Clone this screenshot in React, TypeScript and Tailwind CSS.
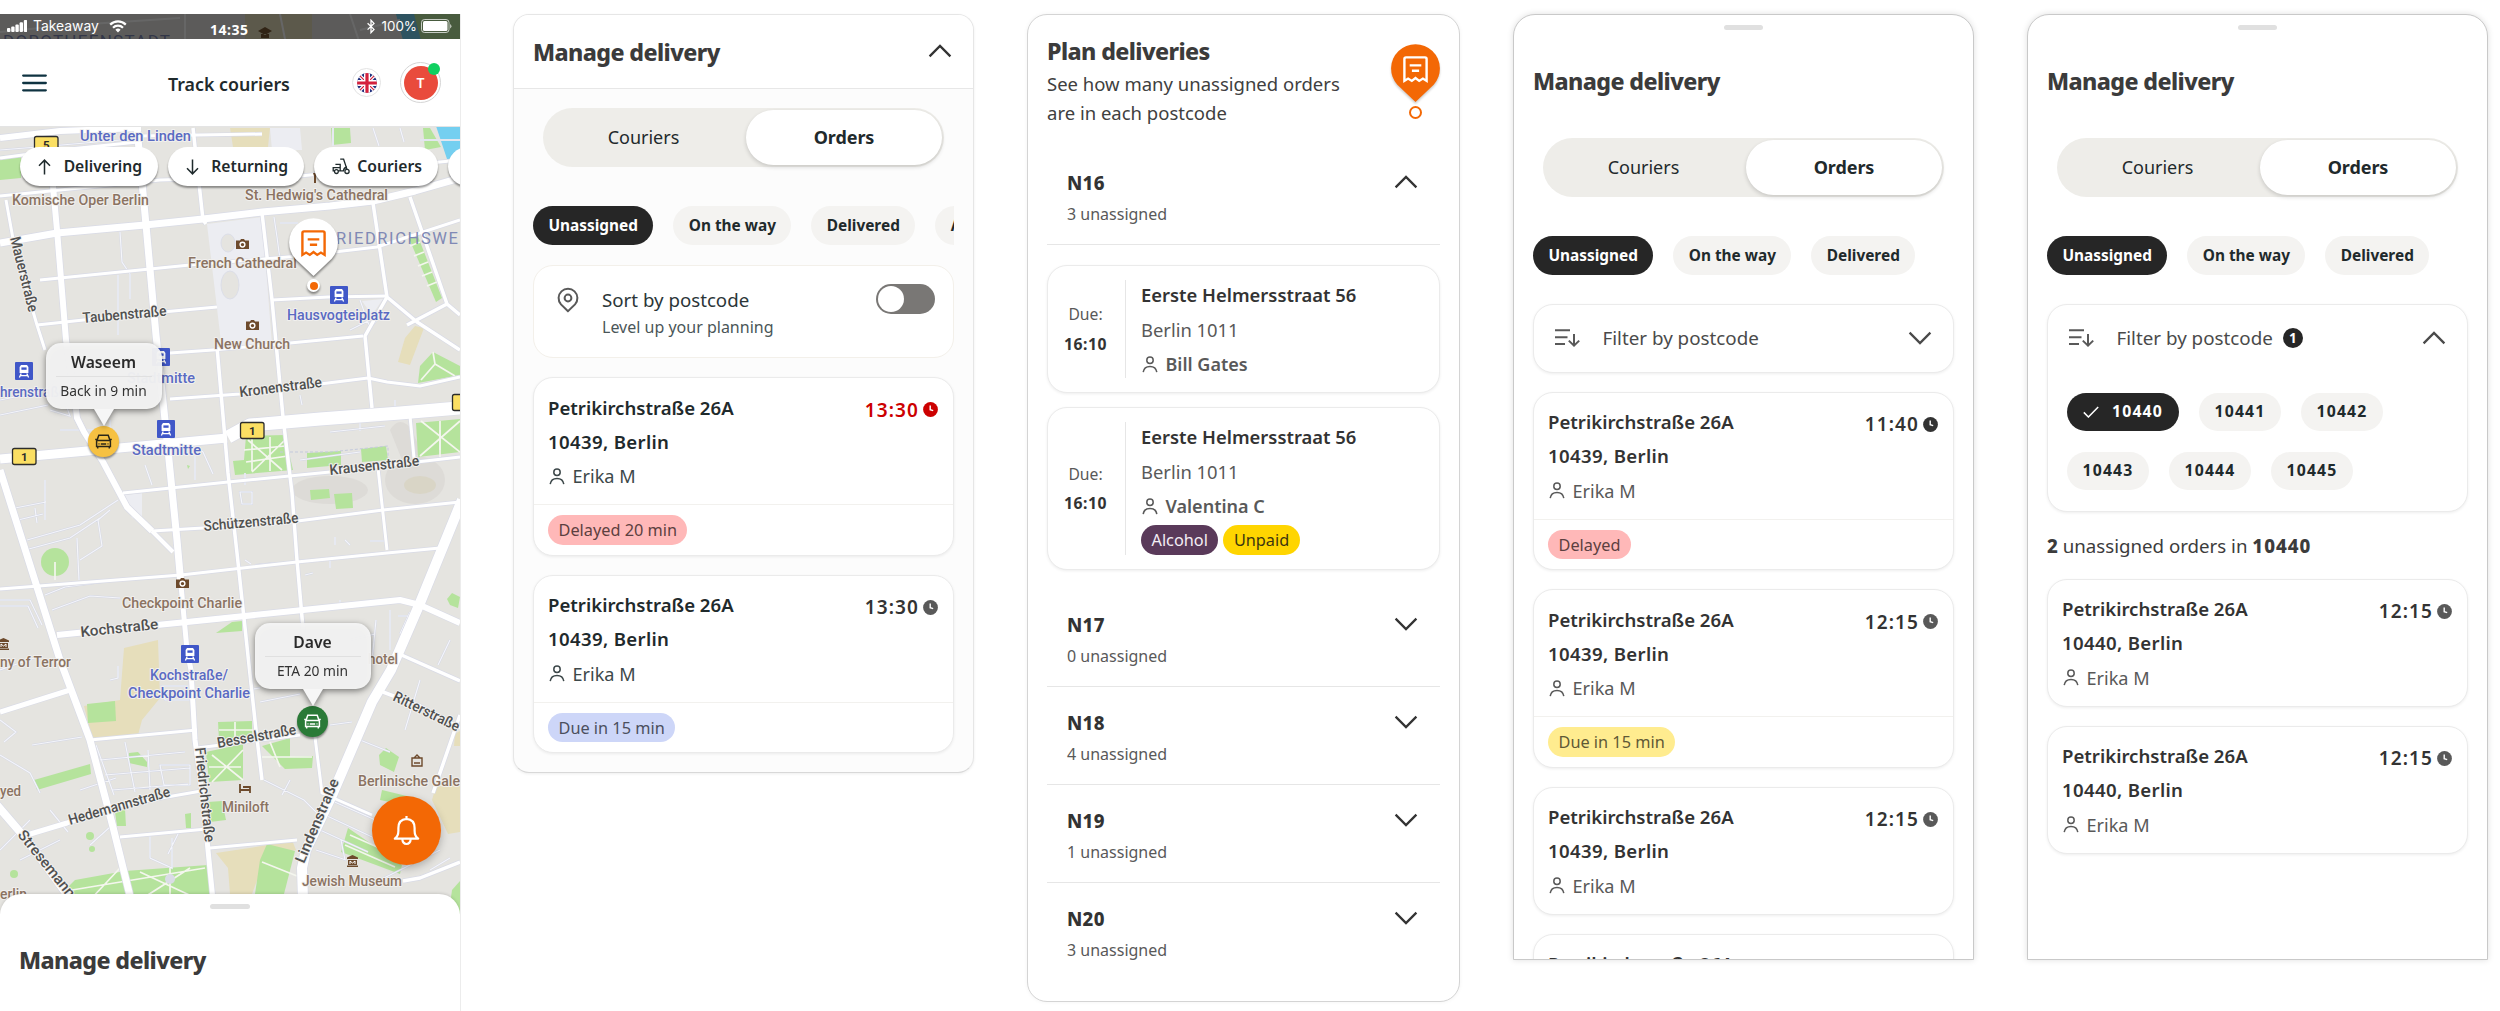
import type { ReactNode } from "react";
import clsx from "clsx";

// ─────────────────────────────────────────────────────────────
// Data
// ─────────────────────────────────────────────────────────────

interface Order {
  address: string;
  city: string;
  courier: string;
  time: string;
  timeClass?: string;
  clockClass?: string;
  tag?: { label: string; className: string };
}

const base = { address: "Petrikirchstraße 26A", city: "10439, Berlin", courier: "Erika M" };

const SORT_ORDERS: Order[] = [
  {
    ...base,
    time: "13:30",
    timeClass: "text-[#cc0000]",
    clockClass: "text-[#cc0000]",
    tag: { label: "Delayed 20 min", className: "bg-[#ffb8b8] text-[#5c4040]" },
  },
  { ...base, time: "13:30", tag: { label: "Due in 15 min", className: "bg-[#cdd6f8] text-[#4b4f5e]" } },
];

const FILTER_ORDERS: Order[] = [
  {
    ...base,
    time: "11:40",
    clockClass: "text-[#333333]",
    tag: { label: "Delayed", className: "bg-[#ffb8b8] text-[#5c4040]" },
  },
  { ...base, time: "12:15", tag: { label: "Due in 15 min", className: "bg-[#ffec8f] text-[#5f5936]" } },
  { ...base, time: "12:15" },
  { ...base, time: "12:15" },
];

const POSTCODE_ORDERS: Order[] = [
  { ...base, city: "10440, Berlin", time: "12:15" },
  { ...base, city: "10440, Berlin", time: "12:15" },
];

const ZONES = [
  { code: "N17", count: 0 },
  { code: "N18", count: 4 },
  { code: "N19", count: 1 },
  { code: "N20", count: 3 },
];

export default function App() {
  return (
    <div className="flex h-[1011px] w-[2500px] items-start overflow-hidden bg-white pt-[14px] font-['Noto_Sans','Open_Sans',sans-serif] text-[#333333]">
      <TrackCouriers />
      <SortPanel />
      <PlanPanel />

      <Sheet>
        <FilterBar />
        {FILTER_ORDERS.map((order, i) => (
          <OrderCard key={i} order={order} />
        ))}
      </Sheet>

      <Sheet>
        <FilterBar open />
        <div className="flex flex-col">
          <p className="h-[48px] text-[18.7px] leading-[30px] text-[#3c3c3c]">
            <b className="font-extrabold">2</b> unassigned orders in <b className="font-extrabold tracking-[1px]">10440</b>
          </p>
          <div className="flex flex-col gap-[19px]">
            {POSTCODE_ORDERS.map((order, i) => (
              <OrderCard key={i} order={order} />
            ))}
          </div>
        </div>
      </Sheet>
    </div>
  );
}

// ─────────────────────────────────────────────────────────────
// Screens
// ─────────────────────────────────────────────────────────────

function TrackCouriers() {
  return (
    <div className="relative flex h-[997px] w-[461px] shrink-0 flex-col overflow-hidden border-r border-[#ececec]">
      <CityMap />

      {/* Status bar */}
      <div className="relative flex h-[25px] shrink-0 items-center bg-[#000000]/60 pr-[8px] pl-[7px] text-white">
        <div className="flex w-[203px] items-center">
          <svg width="20" height="12" viewBox="0 0 20 12" fill="currentColor">
            <rect x="0" y="8" width="3.4" height="4" rx="1" />
            <rect x="4.2" y="6.5" width="3.4" height="5.5" rx="1" />
            <rect x="8.4" y="4.5" width="3.4" height="7.5" rx="1" />
            <rect x="12.6" y="2.2" width="3.4" height="9.8" rx="1" />
            <rect x="16.8" y="0" width="3.4" height="12" rx="1" />
          </svg>
          <span className="ml-[6px] font-['Inter','Roboto',sans-serif] text-[13.9px]">Takeaway</span>
          <svg className="ml-[10px]" width="18" height="13" viewBox="0 0 18 13" fill="none" stroke="currentColor">
            <path d="M1.2 4.6a11 11 0 0 1 15.6 0" strokeWidth="2.2" />
            <path d="M4 7.8a7 7 0 0 1 10 0" strokeWidth="2.2" />
            <path d="M9 12.4 6.4 9.8a3.8 3.8 0 0 1 5.2 0Z" fill="currentColor" stroke="none" />
          </svg>
        </div>
        <span className="mt-[5px] text-[14px] font-bold tracking-[0.5px]">14:35</span>
        <div className="ml-auto flex items-center">
          <svg width="8" height="15" viewBox="0 0 8 15" fill="none" stroke="currentColor" strokeWidth="1.3">
            <path d="M.6 4.2 7 10.4 4 13.6V1.2L7 4.4.6 10.6" />
          </svg>
          <span className="ml-[7px] font-['Inter','Roboto',sans-serif] text-[13.4px]">100%</span>
          <svg className="ml-[4px]" width="31" height="14" viewBox="0 0 31 14">
            <rect x=".5" y=".5" width="27.5" height="13" rx="3" fill="none" stroke="#ffffff" strokeOpacity=".7" />
            <rect x="2" y="2" width="24.5" height="10" rx="1.5" fill="#ffffff" />
            <path d="M29 5v4.4q1.5-.7 1.5-2.2T29 5Z" fill="#ffffff" fillOpacity=".6" />
          </svg>
        </div>
      </div>

      {/* App header */}
      <div className="relative flex h-[88px] shrink-0 items-center border-b border-[#e4e4e4] bg-white pr-[19px] pl-[22px]">
        <svg width="25" height="18" viewBox="0 0 25 18" stroke="#0f3341" strokeWidth="2.3" strokeLinecap="round">
          <path d="M1.2 1.6h22.6M1.2 9h22.6M1.2 16.3h22.6" />
        </svg>
        <h1 className="mt-[3px] ml-[121px] text-[17.8px] font-semibold text-[#1f2a2c]">Track couriers</h1>
        <div className="ml-auto flex items-center gap-[19px]">
          <div className="flex size-[29px] items-center justify-center rounded-full border border-[#e3e3e3]">
            <UkFlag />
          </div>
          <div className="relative flex size-[41px] items-center justify-center rounded-full border border-[#d5d5d5]">
            <span className="flex size-[34px] items-center justify-center rounded-full bg-[#e94b3c] text-[14px] font-semibold text-white">
              T
            </span>
            <span className="absolute top-0 right-0 size-[12px] rounded-full bg-[#10d060]" />
          </div>
        </div>
      </div>

      {/* Map filters */}
      <div className="relative mt-5 flex h-[39px] shrink-0 gap-[10px] pl-5">
        <MapChip className="w-[138px]" label="Delivering">
          <svg width="13" height="16" viewBox="0 0 13 16" fill="none" stroke="currentColor" strokeWidth="1.5">
            <path d="M6.5 15.5V1.2M1 6.7l5.5-5.6L12 6.7" />
          </svg>
        </MapChip>
        <MapChip className="w-[136px]" label="Returning">
          <svg width="13" height="16" viewBox="0 0 13 16" fill="none" stroke="currentColor" strokeWidth="1.5">
            <path d="M6.5.5v14.3M1 9.3l5.5 5.6L12 9.3" />
          </svg>
        </MapChip>
        <MapChip className="w-[124px] pl-[15px]" label="Couriers">
          <svg width="18" height="17" viewBox="0 0 18 17" fill="none" stroke="currentColor" strokeWidth="1.3">
            <path d="M8.2 1.2h3.4l3.4 10.2M3.4 6.4h4.8v6.4H1.2V9.6h7M8.2 12.8h3.2q.6-3.4 3.6-3.8" />
            <circle cx="4.4" cy="13.6" r="1.9" fill="#ffffff" />
            <circle cx="15" cy="13.4" r="2.1" fill="#ffffff" />
          </svg>
        </MapChip>
        <MapChip className="w-[138px]" label="" />
      </div>

      {/* Pins on the map */}
      <div className="absolute top-[204px] left-[289px] flex w-[49px] flex-col items-center drop-shadow-[0_2px_1px_rgba(0,0,0,0.45)]">
        <OrderPin fill="#ffffff" stroke="#f36805" />
        <span className="mt-[3px] flex size-[13px] items-center justify-center rounded-full bg-white">
          <span className="size-[8px] rounded-full bg-[#f36805]" />
        </span>
      </div>
      <CourierPin className="top-[329px] left-[45.5px]" name="Waseem" note="Back in 9 min" color="#f6c142" ink="#2b2718" />
      <CourierPin className="top-[609px] left-[254.5px]" name="Dave" note="ETA 20 min" color="#2a7a37" ink="#ffffff" />

      {/* Notifications */}
      <button className="absolute top-[782px] left-[372px] flex size-[69px] items-center justify-center rounded-full bg-[#f36805] shadow-[0_3px_8px_rgba(0,0,0,0.25)]">
        <svg width="27" height="31" viewBox="0 0 27 31" fill="none" stroke="#ffffff" strokeWidth="2.2" strokeLinejoin="round">
          <path d="M13.5 1v3M1.8 23.7q3.6-2.6 3.6-8v-2.6q0-8.6 8.1-9.2 8.1.6 8.1 9.2v2.6q0 5.4 3.6 8Z" />
          <path d="M9.3 24.2q.4 4.8 4.2 4.8t4.2-4.8" />
        </svg>
      </button>

      {/* Bottom sheet */}
      <div className="relative mt-auto flex h-[117px] shrink-0 flex-col rounded-t-[21px] bg-white px-[19px] shadow-[0_-1px_3px_rgba(0,0,0,0.12)]">
        <span className="mt-[10px] h-[5px] w-[40px] self-center rounded-full bg-[#e0e0e0]" />
        <Title className="mt-[35px]">Manage delivery</Title>
      </div>
    </div>
  );
}

function SortPanel() {
  return (
    <div className="ml-[52px] w-[461px] shrink-0 overflow-hidden rounded-[16px] border border-[#e6e6e6] border-b-[#d8d8d8] bg-[#fcfcfc] shadow-[0_1px_3px_rgba(0,0,0,0.07)]">
      <div className="flex h-[74px] items-center justify-between border-b border-[#e7e7e7] bg-white pr-[21px] pl-[19px]">
        <Title>Manage delivery</Title>
        <Chevron up className="-mt-[2px]" />
      </div>
      <div className="flex flex-col px-[19px] pt-[19px] pb-[19px]">
        <Segmented />
        <StatusChips clipped />
        <div className="mt-5 flex h-[93px] rounded-[20px] border border-[#f3f0ea] bg-white pl-[23px]">
          <svg className="mt-[21px]" width="22" height="26" viewBox="0 0 22 26" fill="none" stroke="#595959" strokeWidth="2">
            <path d="M11 24.2 4 17.4A9.4 9.4 0 1 1 18 17.4Z" />
            <circle cx="11" cy="11" r="3.4" />
          </svg>
          <div className="ml-[23px]">
            <p className="mt-[20px] text-[18.7px] leading-[28px] text-[#2b3638]">Sort by postcode</p>
            <p className="text-[16px] leading-[26px] text-[#4a5658]">Level up your planning</p>
          </div>
          <span className="mt-[18px] mr-[18px] ml-auto h-[30px] w-[59px] rounded-full bg-[#797775] p-[2px]">
            <span className="block size-[26px] rounded-full bg-white" />
          </span>
        </div>
        <div className="mt-[19px] flex flex-col gap-[19px]">
          {SORT_ORDERS.map((order, i) => (
            <OrderCard key={i} order={order} dark />
          ))}
        </div>
      </div>
    </div>
  );
}

function PlanPanel() {
  return (
    <div className="ml-[53px] h-[988px] w-[433px] shrink-0 rounded-[20px] border border-[#d4d4d4] bg-white px-[19px] shadow-[0_0_4px_rgba(0,0,0,0.05)]">
      <div className="flex h-[132px] justify-between">
        <div className="pt-[20px]">
          <Title>Plan deliveries</Title>
          <p className="mt-[2px] w-[320px] text-[18.5px] leading-[29.3px] text-[#404040]">
            See how many unassigned orders are in each postcode
          </p>
        </div>
        <div className="mt-[29px] flex w-[49px] flex-col items-center">
          <div className="drop-shadow-[0_2px_1px_rgba(0,0,0,0.2)]">
            <OrderPin fill="#f36805" stroke="#ffffff" />
          </div>
          <span className="mt-[4px] size-[13px] shrink-0 rounded-full border-[2.5px] border-[#f36805] bg-white" />
        </div>
      </div>

      <ZoneRow code="N16" count={3} open />
      <PlanCard className="mt-5 h-[128px]" courier="Bill Gates" />
      <PlanCard className="mt-[14px] mb-[19px] h-[163px]" courier="Valentina C">
        <div className="mt-[2px] flex gap-[5px]">
          <Tag className="bg-[#5a3a5a] text-[#f4eef4]">Alcohol</Tag>
          <Tag className="bg-[#ffd500] text-[#3d3510]">Unpaid</Tag>
        </div>
      </PlanCard>
      {ZONES.map((zone) => (
        <ZoneRow key={zone.code} {...zone} />
      ))}
    </div>
  );
}

function Sheet({ children }: { children: ReactNode }) {
  return (
    <div className="ml-[53px] flex h-[946px] w-[461px] shrink-0 flex-col overflow-hidden rounded-t-[22px] border border-[#c9c9c9] bg-white px-[19px] shadow-[0_0_6px_rgba(0,0,0,0.13)]">
      <span className="mt-[10px] h-[5px] w-[39px] shrink-0 self-center rounded-full bg-[#e0e0e0]" />
      <Title className="mt-[35px]">Manage delivery</Title>
      <div className="mt-[41px] flex flex-col">
        <Segmented />
        <StatusChips />
      </div>
      <div className="mt-[28.5px] flex flex-col gap-[19px]">{children}</div>
    </div>
  );
}

// ─────────────────────────────────────────────────────────────
// Shared pieces
// ─────────────────────────────────────────────────────────────

function Title({ children, className }: { children: ReactNode; className?: string }) {
  return (
    <h2 className={clsx("text-[23.2px] leading-8 font-extrabold tracking-[-0.6px] text-[#3b3b3b]", className)}>{children}</h2>
  );
}

function Chevron({ up, className }: { up?: boolean; className?: string }) {
  return (
    <svg className={clsx("shrink-0", className)} width="24" height="14" viewBox="0 0 24 14" fill="none" stroke="currentColor" strokeWidth="2.3">
      <path d={up ? "M1.6 12.4 12 2l10.4 10.4" : "M1.6 1.6 12 12 22.4 1.6"} />
    </svg>
  );
}

function Segmented() {
  return (
    <div className="mx-[10px] flex h-[59px] rounded-full bg-[#eeede9] p-[2px] text-[18px] text-[#1f2a2c]">
      <div className="flex w-[201px] items-center justify-center pr-[4px]">Couriers</div>
      <div className="flex flex-1 items-center justify-center rounded-full bg-white font-bold tracking-[-0.1px] shadow-[0_2px_4px_rgba(0,0,0,0.16)]">
        Orders
      </div>
    </div>
  );
}

function StatusChips({ clipped }: { clipped?: boolean }) {
  return (
    <div className="mt-[39px] flex gap-[20px] overflow-hidden">
      <Pill active>Unassigned</Pill>
      <Pill>On the way</Pill>
      <Pill>Delivered</Pill>
      {clipped && <Pill>All</Pill>}
    </div>
  );
}

function Pill({ children, active }: { children: ReactNode; active?: boolean }) {
  return (
    <span
      className={clsx(
        "flex h-[39px] shrink-0 items-center rounded-full px-[15.4px] pt-px text-[15.4px] font-bold",
        active ? "bg-[#262626] text-white" : "bg-[#f4f3f1] text-[#1f2a2c]",
      )}
    >
      {children}
    </span>
  );
}

function Tag({ children, className }: { children: ReactNode; className: string }) {
  return (
    <span className={clsx("flex h-[29.5px] items-center rounded-full px-[10.5px] pt-px text-[16.3px]", className)}>
      {children}
    </span>
  );
}

function PersonIcon() {
  return (
    <svg width="16" height="17" viewBox="0 0 16 17" fill="none" stroke="currentColor" strokeWidth="1.5">
      <circle cx="8" cy="4.3" r="3.2" />
      <path d="M1.2 16.2Q2 10.4 8 10.4t6.8 5.8" />
    </svg>
  );
}

function OrderCard({ order, dark }: { order: Order; dark?: boolean }) {
  return (
    <div className="shrink-0 rounded-[20px] border border-[#ebebeb] bg-white shadow-[0_1px_3px_rgba(0,0,0,0.07)]">
      <div className="flex h-[126px] items-start justify-between pt-[12.5px] pr-[15px] pl-[14px]">
        <div className={clsx("leading-[34.3px]", dark ? "text-[#1f2a2c]" : "text-[#333333]")}>
          <p className="text-[18.6px] font-semibold">{order.address}</p>
          <p className="text-[18.6px] font-semibold tracking-[0.35px]">{order.city}</p>
          <p className={clsx("flex items-center gap-[7.5px] pl-px text-[18.1px]", dark ? "text-[#3d484a]" : "text-[#595959]")}>
            <PersonIcon />
            {order.courier}
          </p>
        </div>
        <div className={clsx("mt-[2px] flex items-center gap-[4px] leading-[34px]", order.timeClass)}>
          <span className="text-[19px] font-semibold tracking-[1.1px]">{order.time}</span>
          <svg className={order.clockClass ?? "text-[#595959]"} width="15" height="15" viewBox="0 0 15 15">
            <circle cx="7.5" cy="7.5" r="7.4" fill="currentColor" />
            <path d="M7.2 3.6v4.1l3 .9" fill="none" stroke="#ffffff" strokeWidth="1.4" />
          </svg>
        </div>
      </div>
      {order.tag && (
        <div className="flex h-[50.5px] items-center border-t border-[#f2f1ee] px-[14px]">
          <Tag className={order.tag.className}>{order.tag.label}</Tag>
        </div>
      )}
    </div>
  );
}

function ZoneRow({ code, count, open }: { code: string; count: number; open?: boolean }) {
  return (
    <div className={clsx("flex h-[98.1px] justify-between border-b pr-[22px] pl-[20px]", code === "N20" ? "border-transparent" : "border-[#e6e6e6]")}>
      <div className="pt-[20.5px]">
        <p className="text-[18.6px] leading-[30px] font-extrabold tracking-[0.3px]">{code}</p>
        <p className="mt-[4px] text-[16px] leading-6 text-[#595959]">{count} unassigned</p>
      </div>
      <Chevron up={open} className="mt-[27.5px]" />
    </div>
  );
}

function PlanCard({ courier, className, children }: { courier: string; className?: string; children?: ReactNode }) {
  return (
    <div className={clsx("flex rounded-[20px] border border-[#ebebeb] bg-white py-[14px] shadow-[0_1px_3px_rgba(0,0,0,0.07)]", className)}>
      <div className="flex w-[78px] flex-col items-center justify-center border-r border-[#e6e6e6] pt-px pr-[2px] text-[15.7px] leading-[29.5px]">
        <span className="text-[#595959]">Due:</span>
        <span className="font-bold tracking-[0.5px]">16:10</span>
      </div>
      <div className="-mt-[2px] pl-[15px] text-[18.4px] leading-[34.4px]">
        <p className="font-semibold">Eerste Helmersstraat 56</p>
        <p className="text-[#595959]">Berlin 1011</p>
        <p className="flex items-center gap-[7.5px] pl-px text-[18px] font-semibold text-[#595959]">
          <PersonIcon />
          {courier}
        </p>
        {children}
      </div>
    </div>
  );
}

function FilterBar({ open }: { open?: boolean }) {
  return (
    <div className="shrink-0 rounded-[20px] border border-[#ebebeb] bg-white text-[#4a4a4a] shadow-[0_1px_3px_rgba(0,0,0,0.07)]">
      <div className="flex h-[67px] items-center pr-[21px] pl-[20px]">
        <svg width="27" height="20" viewBox="0 0 27 20" fill="none" stroke="#595959" strokeWidth="2">
          <path d="M1 2.2h15M1 9.2h12.5M1 15.9h10M20 6v11.5M14.8 12.6l5.2 5 5.2-5" />
        </svg>
        <span className="ml-[21.5px] text-[18.8px]">Filter by postcode</span>
        {open && (
          <span className="ml-[10px] flex size-[20px] items-center justify-center rounded-full bg-[#262626] text-[13.5px] font-bold text-white">
            1
          </span>
        )}
        <Chevron up={open} className="ml-auto" />
      </div>
      {open && (
        <div className="flex h-[139px] flex-wrap content-start gap-x-[20px] gap-y-[20.5px] px-[19px] pt-[21px]">
          <PostcodePill code="10440" active />
          {["10441", "10442", "10443", "10444", "10445"].map((code) => (
            <PostcodePill key={code} code={code} />
          ))}
        </div>
      )}
    </div>
  );
}

function PostcodePill({ code, active }: { code: string; active?: boolean }) {
  return (
    <span
      className={clsx(
        "flex h-[38.5px] items-center justify-center rounded-full pt-px text-[15.8px] font-bold tracking-[1.2px]",
        active ? "w-[112px] gap-[13px] bg-[#262626] text-white" : "w-[82px] bg-[#f4f3f1] text-[#1f2a2c]",
      )}
    >
      {active && (
        <svg width="16" height="12" viewBox="0 0 16 12" fill="none" stroke="currentColor" strokeWidth="1.5">
          <path d="M.8 6.4 5.4 11 15.2 1" />
        </svg>
      )}
      {code}
    </span>
  );
}

// ─────────────────────────────────────────────────────────────
// Map overlays
// ─────────────────────────────────────────────────────────────

function MapChip({ label, className, children }: { label: string; className?: string; children?: ReactNode }) {
  return (
    <div
      className={clsx(
        "flex shrink-0 items-center justify-between rounded-full bg-white pr-[16px] pl-[18px] text-[#1f2a2c] shadow-[0_2px_2px_rgba(0,0,0,0.4)]",
        className,
      )}
    >
      {children}
      <span className="pt-px text-[15.7px] font-semibold">{label}</span>
    </div>
  );
}

function OrderPin({ fill, stroke }: { fill: string; stroke: string }) {
  return (
    <svg width="49" height="58" viewBox="0 0 49 58">
      <path d="M24.5 58 6.3 40.8A24.4 24.4 0 1 1 42.7 40.8Z" fill={fill} />
      <g fill="none" stroke={stroke} strokeWidth="2.4">
        <path d="M13.4 36.9V15q0-1.6 1.6-1.6h19q1.6 0 1.6 1.6v21.9l-3.7-2.3-3.7 2.3-3.7-2.9-3.7 2.9-3.7-2.3Z" />
        <path d="M18.7 21.4h11.6M20.9 26.8h7.2" />
      </g>
    </svg>
  );
}

function CourierPin({
  name,
  note,
  color,
  ink,
  className,
}: {
  name: string;
  note: string;
  color: string;
  ink: string;
  className: string;
}) {
  return (
    <div className={clsx("absolute flex w-[116px] flex-col items-center", className)}>
      <div className="flex flex-col items-center drop-shadow-[0_2px_3px_rgba(0,0,0,0.5)]">
        <div className="flex h-[66px] w-[116px] flex-col items-center rounded-[15px] bg-[#f6f6f6]/95 px-[10px]">
          <p className="h-[34px] w-full border-b border-[#e0e0e0] pt-[7px] text-center text-[15.7px] leading-6 font-semibold text-[#2a2a2a]">
            {name}
          </p>
          <p className="text-[13.8px] leading-[27px] text-[#333333]">{note}</p>
        </div>
        <svg width="20" height="17" viewBox="0 0 20 17">
          <path d="M0 0h20L10 17Z" fill="#f6f6f6" />
        </svg>
      </div>
      <span className="flex size-[31px] items-center justify-center rounded-full shadow-[0_2px_2px_rgba(0,0,0,0.4)]" style={{ background: color }}>
        <svg width="17" height="15" viewBox="0 0 17 15" fill="none" stroke={ink} strokeWidth="1.5">
          <path d="M1.6 12.6V7.4L3.8 1.3h9.4l2.2 6.1v5.2ZM.2 5.6h2M14.8 5.6h2M2.6 6.6h11.8M5.8 9.9h5.4M2.7 12.6v2M14.3 12.6v2" />
          <path d="M3.6 9.9h.8M12.6 9.9h.8" strokeWidth="1.8" />
        </svg>
      </span>
    </div>
  );
}

function UkFlag() {
  return (
    <svg width="20" height="20" viewBox="0 0 20 20">
      <clipPath id="flag">
        <circle cx="10" cy="10" r="10" />
      </clipPath>
      <g clipPath="url(#flag)">
        <rect width="20" height="20" fill="#1f2f7c" />
        <path d="M0 0l20 20M20 0 0 20" stroke="#ffffff" strokeWidth="3.6" />
        <path d="M0 0l20 20M20 0 0 20" stroke="#d4213d" strokeWidth="1.2" />
        <path d="M10 0v20M0 10h20" stroke="#ffffff" strokeWidth="6" />
        <path d="M10 0v20M0 10h20" stroke="#d4213d" strokeWidth="3.2" />
      </g>
    </svg>
  );
}

// ─────────────────────────────────────────────────────────────
// City map
// ─────────────────────────────────────────────────────────────

const ROADS: { w: number; d: string }[] = [
  { w: 6, d: "M0 138 60 131 141 128" },
  { w: 3, d: "M140 136 262 134M0 158 60 150 138 142M0 196 60 190 160 180 300 176 460 160M6 200 15 250 37 325 45 350" },
  { w: 7, d: "M0 243 57 233 145 225 203 219 262 212 330 206 373 201 415 191 460 178" },
  { w: 6, d: "M53 186 57 230 66 340 75 400 77 418 84 432 103 462 127 507 152 531" },
  { w: 4, d: "M152 531 173 552" },
  { w: 7, d: "M137 128 146 225 156 335 165 420 171 480 177 540 181 585" },
  { w: 5, d: "M181 585 187 650 191 670 195 740 203 800 208 850 213 900" },
  { w: 3.5, d: "M193 128 203 220 206 224M217 347 228 473 237 553 249 665 256 730 262 780M262 213 272 300 283 417 292 493 297 560 304 640" },
  { w: 3.5, d: "M373 203 387 297 417 322 460 350M387 297 365 336 372 408M410 197 447 304 460 315M447 304 407 325" },
  { w: 3, d: "M40 280 190 265 300 256 377 247 460 220M272 300 328 297 387 296M37 325 130 315 217 307M170 353 213 350 290 343 363 336" },
  { w: 3, d: "M170 399 240 394 320 384 368 378 387 382 420 386 460 377M123 493 228 482 330 472 460 457M152 531 203 528 290 522 383 510 460 502" },
  { w: 9, d: "M0 459 87 451 227 438" },
  { w: 13, d: "M228 437 250 425 320 419 400 413 470 407" },
  { w: 3, d: "M0 589 181 575 297 562 387 553 440 548M378 468 387 550M410 416 414 458" },
  { w: 6, d: "M57 635 187 622 303 610 400 600 420 605 460 623" },
  { w: 7, d: "M0 470 37 587 60 660 90 740 113 827 131 900" },
  { w: 10, d: "M462 500 420 603 391 670 372 702 333 793 306 850 302 868 303 900" },
  { w: 5, d: "M0 712 70 690M27 835 67 823 107 808" },
  { w: 8, d: "M-4 804 27 840 75 905" },
  { w: 3, d: "M90 740 197 730M197 748 300 735M107 808 167 797 207 790M120 837 207 829M210 848 297 840M315 737 322 793 372 815" },
  { w: 3.5, d: "M383 692 420 706 460 728M397 653 460 681M460 715 433 793M403 881 420 878 460 862M303 560" },
];

const LANES =
  "M0 400 40 392 60 378M0 415 48 405M0 150 50 146 120 140M333 128v18M400 128l4 14M420 140h60M373 128l6 18M120 232l2 30 8 12v25M118 275v60M274 217l3 20 4 30M280 223h18M350 330l20-10M360 300l10 28 12-14" +
  "M15 508 46 502M18 520l25-6M45 480v40M35 508l2 15M27 540 80 525 118 500M25 550 70 538 100 518M77 538l2 42M80 560l22-14-4-26 12-10M45 595l20-8 45-6M52 610l38-14 30 2M0 600h30l12 25M0 606h28l10 22" +
  "M60 430h50v-10M50 410l20 6-5-14M145 465l7 20M185 450l8-6 10 8 10 22M195 440v40M240 492h12v12h-10zM245 485v-12M330 432 385 426M360 416v15M300 460l60-8" +
  "M165 700h25v-14h-28zM96 745l18 50M100 760 185 752M105 775 190 768M112 790l76-6M125 742l10 50M148 750l2 40M80 790l36-12M50 810l18 22M20 860l40-20M0 850l30-30M90 845l20-18M150 832v26l22 10v-30M180 830l-12 24" +
  "M230 692l30-4M260 702l40-8M264 780l40 20 20 20M290 780l-8 15M340 600v10M350 640l25-6M390 610v40M376 620l-4 40M410 612l-10 22M398 616h20M330 725l22-3M360 740l30 12M420 680l-15 50M450 640l-12 25" +
  "M330 800l50 22M325 815l60 28M320 830l48 22M316 850l30 10M345 860l-4-20M380 880l60-30M400 860l40-20M430 870l20-12M0 670l40-14M0 720l16 12-12 10M32 745l50-8M0 755l30 18 10 20M110 680l8-2v-12M245 560l6 4M255 565l20-2M305 575l8-2M330 560v8" +
  "M160 765h30v20h-26zM440 430v20M300 395l2 10M395 400v8M350 545l-5-5M335 545v-8M370 541h14";

const PARKS = [
  "0,156 21,154 21,178 0,180",
  "331,128 350,128 351,143 332,145",
  "423,128 430,128 441,147 425,150",
  "408,236 417,234 442,298 436,302",
  "418,383 420,366 433,352 460,366 460,375",
  "416,423 460,419 460,452 418,457",
  "246,436 285,435 293,470 235,475 233,461 244,460",
  "307,453 341,451 341,465 307,468",
  "361,449 386,446 388,460 362,462",
  "310,490 329,489 330,498 311,500",
  "334,494 352,493 353,508 336,509",
  "216,633 232,622 242,621 242,631",
  "447,599 452,593 460,597 458,608 450,605",
  "87,704 115,701 116,721 88,723",
  "34,780 90,764 91,774 37,790",
  "129,753 138,752 147,762 147,767 129,763",
  "218,722 252,721 252,736 219,740",
  "206,752 243,744 243,780 209,782",
  "262,746 290,738 290,757 313,756 312,768 285,769",
  "379,755 386,748 399,757 394,772 380,765",
  "382,790 415,798 405,805 380,800",
  "348,828 402,865 400,874 341,852",
  "267,844 295,851 284,894 255,894 260,860",
  "55,900 75,880 125,871 208,865 210,900",
  "115,812 125,809 126,826 117,826",
  "208,802 222,801 226,820 210,822",
  "185,814 191,813 191,828 186,828",
  "452,890 461,880 461,915 450,905",
  "187,465 190,466 188,469",
];

const SQUARES = ["270,128 300,128 302,150 272,150", "207,224 262,217 272,345 222,350", "125,495 142,493 142,520 132,518", "362,301 383,299 372,315"];

const SAND = [
  "230,128 270,128 268,147 233,147",
  "415,326 424,328 410,365 398,362 405,338",
  "124,648 158,640 160,698 142,720 138,735 92,738 84,706 120,700",
  "216,853 262,846 292,840 296,850 266,856 252,894 230,894 228,868",
  "436,786 460,780 460,832 448,834 432,800",
  "455,734 461,730 461,746 454,746",
];

interface MapLabel {
  text: string;
  x: number;
  y: number;
  w: number;
  rotate?: number;
  kind?: "street" | "poi" | "station";
}

const LABELS: MapLabel[] = [
  { text: "Unter den Linden", x: 80, y: 141, w: 111, kind: "station" },
  { text: "Komische Oper Berlin", x: 12, y: 205, w: 137, kind: "poi" },
  { text: "St. Hedwig's Cathedral", x: 245, y: 200, w: 143, kind: "poi" },
  { text: "French Cathedral", x: 188, y: 268, w: 109, kind: "poi" },
  { text: "Hausvogteiplatz", x: 287, y: 320, w: 103, kind: "station" },
  { text: "Taubenstraße", x: 83, y: 323, w: 84, rotate: -5 },
  { text: "Mauerstraße", x: 10, y: 238, w: 77, rotate: 76 },
  { text: "New Church", x: 214, y: 349, w: 76, kind: "poi" },
  { text: "Stadtmitte", x: 127, y: 383, w: 68, kind: "station" },
  { text: "hrenstraße", x: 0, y: 397, w: 66, kind: "station" },
  { text: "Kronenstraße", x: 240, y: 397, w: 83, rotate: -7 },
  { text: "Stadtmitte", x: 132, y: 455, w: 69, kind: "station" },
  { text: "Krausenstraße", x: 330, y: 475, w: 90, rotate: -6 },
  { text: "Schützenstraße", x: 204, y: 531, w: 95, rotate: -5 },
  { text: "Checkpoint Charlie", x: 122, y: 608, w: 120, kind: "poi" },
  { text: "Kochstraße", x: 81, y: 637, w: 78, rotate: -6 },
  { text: "ny of Terror", x: 0, y: 667, w: 71, kind: "poi" },
  { text: "hotel", x: 368, y: 664, w: 30, kind: "poi" },
  { text: "Kochstraße/", x: 150, y: 680, w: 78, kind: "station" },
  { text: "Checkpoint Charlie", x: 128, y: 698, w: 122, kind: "station" },
  { text: "Ritterstraße", x: 392, y: 700, w: 72, rotate: 26 },
  { text: "Besselstraße", x: 218, y: 748, w: 80, rotate: -10 },
  { text: "Berlinische Gale", x: 358, y: 786, w: 102, kind: "poi" },
  { text: "Miniloft", x: 222, y: 812, w: 47, kind: "poi" },
  { text: "Friedrichstraße", x: 195, y: 748, w: 95, rotate: 84 },
  { text: "Hedemannstraße", x: 70, y: 825, w: 105, rotate: -16 },
  { text: "Stresemann", x: 17, y: 835, w: 82, rotate: 51 },
  { text: "Lindenstraße", x: 304, y: 864, w: 90, rotate: -67 },
  { text: "Jewish Museum", x: 302, y: 886, w: 100, kind: "poi" },
  { text: "yed", x: 0, y: 796, w: 21, kind: "poi" },
  { text: "erlin", x: 0, y: 899, w: 27, kind: "poi" },
];

const LABEL_FILL = { street: "#505050", poi: "#8b7362", station: "#5a6ac2" };

function CityMap() {
  return (
    <svg className="absolute inset-0" width="461" height="900" viewBox="0 14 461 900">
      <rect y="14" width="461" height="900" fill="#e5e4e0" />
      <g fill="#dddbd7">
        <ellipse cx="330" cy="490" rx="38" ry="14" />
        <ellipse cx="415" cy="480" rx="30" ry="24" />
        <path d="M390 430q10-16 22 0l10 24-20 6Z" />
      </g>
      <ellipse cx="420" cy="485" rx="16" ry="9" fill="#d9d5c6" />
      <g fill="#e6debb">
        {SAND.map((p) => (
          <polygon key={p} points={p} />
        ))}
      </g>
      <g fill="#ecedf2">
        {SQUARES.map((p) => (
          <polygon key={p} points={p} />
        ))}
      </g>
      <g fill="#b5e39c">
        {PARKS.map((p) => (
          <polygon key={p} points={p} />
        ))}
        <circle cx="55" cy="562" r="14" />
        <circle cx="90" cy="836" r="4" />
        <circle cx="92" cy="849" r="3" />
        <circle cx="14" cy="874" r="4" />
      </g>
      <path d="M436 126h25v34l-11 8-6-18Z" fill="#74cff0" />

      {/* Small lanes and footpaths */}
      <path d={LANES} fill="none" stroke="#d3d6e4" strokeWidth="2" />
      <path d={LANES} fill="none" stroke="#f4f5fa" strokeWidth="1.2" />
      <path
        d="M248 440 282 470M285 440 252 472M244 450 285 446M246 462 288 456M252 437v34M270 437v34M421 421 460 452M460 421 420 456M440 421v36M433 352l2 12-14 16M435 364l20 12M212 755 243 780M243 750 212 782M209 767h32M222 740l40-4M235 722v18M219 730h34M270 742l10 25M262 757 312 757M60 892 205 868M90 900 120 868M140 900l50-32M140 872l60 28M170 868v32M262 862l35 14M350 835l50 22M345 845l50 22M410 246l10-4M414 256l10-4M418 266l10-4M422 276l10-4M427 286l10-4M55 562v18"
        fill="none"
        stroke="#f4f6ee"
        strokeWidth="1.7"
      />
      <path d="M280 452 330 452 388 446V460" fill="none" stroke="#c3c9dc" strokeDasharray="3 2" />

      {/* Streets */}
      <g fill="none" stroke="#d9dbe6" strokeLinejoin="round">
        {ROADS.map((r) => (
          <path key={r.d} d={r.d} strokeWidth={r.w + 1.4} />
        ))}
      </g>
      <g fill="none" stroke="#ffffff" strokeLinejoin="round">
        {ROADS.map((r) => (
          <path key={r.d} d={r.d} strokeWidth={r.w} />
        ))}
      </g>
      <g fill="#e5e4e0">
        <ellipse cx="228" cy="243" rx="7" ry="9" stroke="#dcdee8" />
        <ellipse cx="230" cy="285" rx="9" ry="14" stroke="#dcdee8" />
        <circle cx="170" cy="879" r="5" fill="#dadce6" />
      </g>

      {/* Strip behind the status bar */}
      <path d="M245 14h67v30h-67Z" fill="#e6debb" />
      <path d="M396 14h65v30h-50Z" fill="#b5e39c" />
      <path d="M396 14h18l8 30h-18Z" fill="#74cff0" />
      <path d="M0 32 60 26 180 18M185 14v30M350 14l10 30M280 14l6 30M360 30l40-10" stroke="#ffffff" strokeWidth="2" fill="none" />
      <text x="3" y="47" textLength="167" fontSize="17" fill="#8089b5" fontFamily="Roboto, sans-serif">
        DOROTHEENSTADT
      </text>
      <path d="m258 31 7-4 7 4-7 4ZM261 34v4h8v-4" fill="#7a5a36" />

      <text x="336" y="244" textLength="122" fontSize="16.5" fill="#8089b5" fontFamily="Roboto, sans-serif">
        RIEDRICHSWE
      </text>
      <g fontFamily="Roboto, 'Open Sans', sans-serif" fontSize="14.7" fontWeight="500" stroke="#f1f0ee" strokeWidth="2" paintOrder="stroke" strokeLinejoin="round">
        {LABELS.map((l) => (
          <text
            key={`${l.text}-${l.y}`}
            x={l.x}
            y={l.y}
            textLength={l.w}
            lengthAdjust="spacingAndGlyphs"
            fill={LABEL_FILL[l.kind ?? "street"]}
            transform={l.rotate ? `rotate(${l.rotate} ${l.x} ${l.y})` : undefined}
          >
            {l.text}
          </text>
        ))}
      </g>

      <RoadShield x={34} y={136} label="5" />
      <RoadShield x={12} y={448} label="1" />
      <RoadShield x={240} y={422} label="1" />
      <RoadShield x={452} y={394} label="" />

      <Station x={330} y={286} />
      <Station x={15} y={362} />
      <Station x={152} y={348} />
      <Station x={157} y={420} />
      <Station x={181} y={645} />

      <Camera x={236} y={239} />
      <Camera x={246} y={320} />
      <Camera x={176} y={578} />

      <Museum x={347} y={855} />
      <Museum x={-2} y={638} />
      <g fill="none" stroke="#6d4a2c" strokeWidth="1.4">
        <path d="M412 758h10v8h-10zM414 758l3-3 3 3M414 763h6" />
        <path d="M240 784v9M240 790h10v3M243 787h7v3" strokeWidth="1.8" />
      </g>
      <path d="M313 173h5v2h-2v8h-2v-7Z" fill="#6d4a2c" />
    </svg>
  );
}

function RoadShield({ x, y, label }: { x: number; y: number; label: string }) {
  return (
    <g>
      <rect x={x + 0.5} y={y + 0.5} width="23.5" height="16" rx="2" fill="#fbdf63" stroke="#2c2c2c" strokeWidth="1.3" />
      <text x={x + 12.2} y={y + 13} textAnchor="middle" fontSize="11.5" fontWeight="700" fill="#2c2c2c" fontFamily="Roboto, sans-serif">
        {label}
      </text>
    </g>
  );
}

function Station({ x, y }: { x: number; y: number }) {
  return (
    <g transform={`translate(${x} ${y})`}>
      <rect width="18" height="18" rx="1" fill="#4057c8" />
      <path d="M6 3h6l1.4 2v6H4.6V5Z" fill="#ffffff" />
      <path d="M6.4 5.4h5.2v2.4H6.4z" fill="#4057c8" />
      <path d="M6.2 11.5 4.4 15.5M11.8 11.5l1.8 4M5.4 13.6h7.2" stroke="#ffffff" strokeWidth="1.3" />
    </g>
  );
}

function Camera({ x, y }: { x: number; y: number }) {
  return (
    <g transform={`translate(${x} ${y})`}>
      <path d="M0 1.5h4L5 0h3l1 1.5h4V10H0Z" fill="#6d4a2c" />
      <circle cx="6.5" cy="5.6" r="2.4" fill="#6d4a2c" stroke="#ffffff" strokeWidth="1.4" />
    </g>
  );
}

function Museum({ x, y }: { x: number; y: number }) {
  return (
    <g transform={`translate(${x} ${y})`} fill="#6d4a2c">
      <path d="M0 2.5 5.5 0 11 2.5V4H0ZM1 5h9v5H1ZM0 10.5h11v1.5H0Z" />
      <path d="M3 9V6l2.5 2L8 6v3" fill="none" stroke="#ffffff" />
    </g>
  );
}
